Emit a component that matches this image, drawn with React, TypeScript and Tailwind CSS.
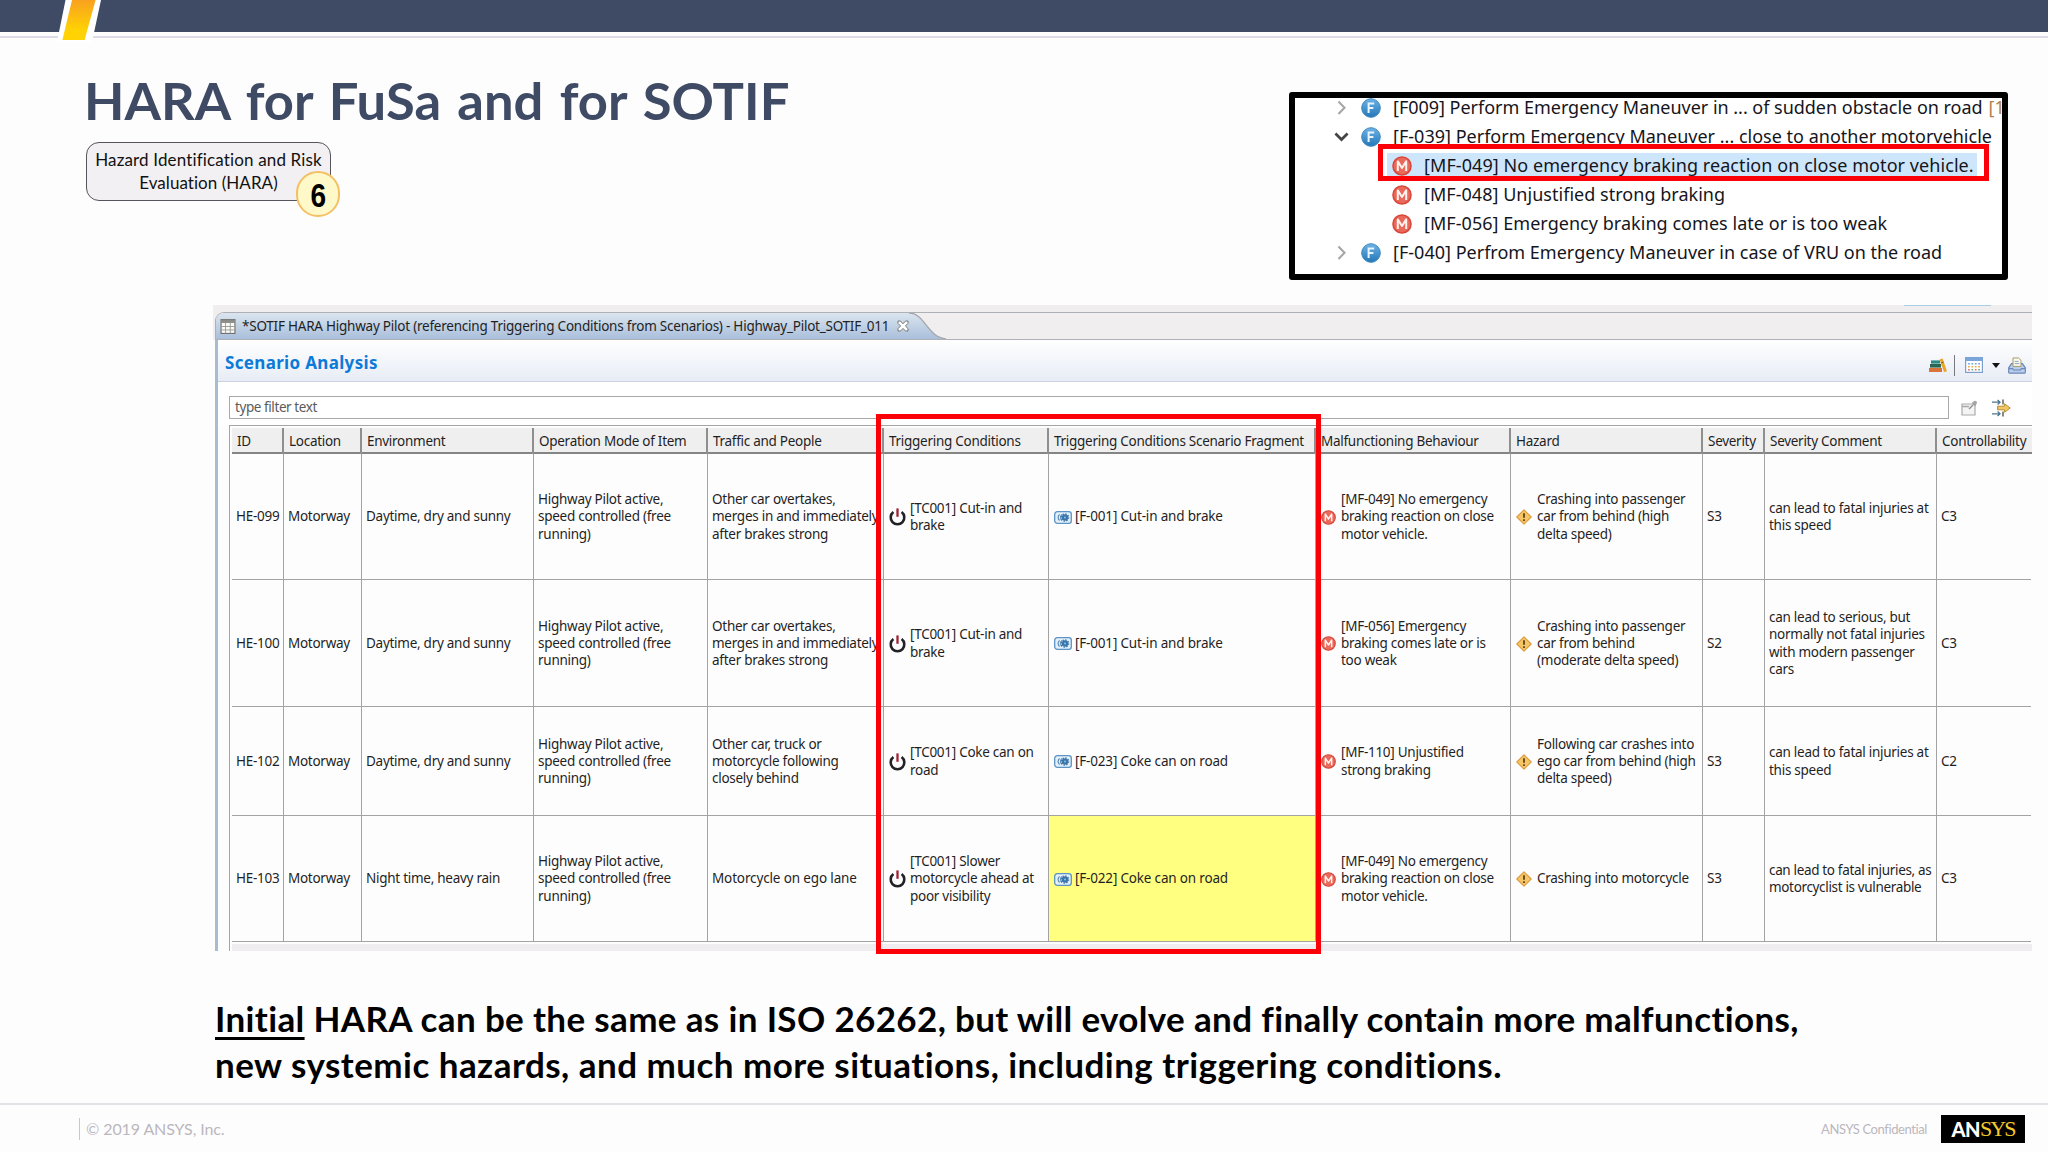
import { clsx } from "clsx"
import type { ReactNode } from "react"

type Cell = {
  text: string
  icon?: ReactNode
  highlight?: boolean
  textClass?: string
}

type TreeRow = {
  label: string
  kind: "F" | "M"
  state?: "open" | "closed"
  selected?: boolean
  suffix?: string
  labelClass: string
}

const GRID =
  "grid grid-cols-[52px_78px_172px_174px_176px_165px_267px_195px_192px_62px_172px_94px]"

function FunctionIcon() {
  return (
    <svg viewBox="0 0 20 20" className="size-5 shrink-0">
      <defs>
        <linearGradient id="fn-fill" x1="0" y1="0" x2="0" y2="1">
          <stop offset="0" stopColor="#6db3e6" />
          <stop offset="1" stopColor="#2377b8" />
        </linearGradient>
      </defs>
      <circle cx="10" cy="10" r="9.3" fill="url(#fn-fill)" stroke="#3e86bd" strokeWidth="1" />
      <path d="M7.6 15V5.4h5.6M7.6 10h4.8" fill="none" stroke="#e9f4fc" strokeWidth="2" />
    </svg>
  )
}

function MalfunctionIcon({ className }: { className: string }) {
  return (
    <svg viewBox="0 0 20 20" className={clsx("shrink-0", className)}>
      <circle cx="10" cy="10" r="9" fill="#e96a5b" stroke="#d9473c" strokeWidth="1.6" />
      <path
        d="M5.8 15V5.4L10 12l4.2-6.6V15"
        fill="none"
        stroke="#fff1ec"
        strokeWidth="2"
        strokeLinejoin="round"
      />
    </svg>
  )
}

function PowerIcon() {
  return (
    <svg viewBox="0 0 17 18" className="h-[18px] w-[17px] shrink-0">
      <path d="M4.4 4a6.8 6.8 0 1 0 8.2 0" fill="none" stroke="#222226" strokeWidth="2.6" />
      <path d="M8.5 0.4v8.4" stroke="#9c2433" strokeWidth="2.3" />
    </svg>
  )
}

function FragmentIcon() {
  return (
    <svg viewBox="0 0 18 13" className="-mr-px h-[13px] w-[18px] shrink-0">
      <rect x="0.7" y="0.7" width="16.6" height="11.6" rx="2.6" fill="#e3f0fa" stroke="#5c94c4" strokeWidth="1.3" />
      <path d="M5.6 3.6a3.6 3.6 0 0 0 0 5.8M8 3.6a3.6 3.6 0 0 0 0 5.8" fill="none" stroke="#5b8db9" strokeWidth="1.2" />
      <circle cx="11" cy="6.5" r="3.2" fill="#3a76ab" />
      <circle cx="11" cy="6.5" r="3.6" fill="none" stroke="#3a76ab" strokeWidth="1.4" strokeDasharray="1.4 1.4" />
      <circle cx="11" cy="6.5" r="0.9" fill="#9fc4e2" />
    </svg>
  )
}

function HazardIcon() {
  return (
    <svg viewBox="0 0 16 16" className="mr-px size-4 shrink-0">
      <path d="M8 0.8 15.2 8 8 15.2 0.8 8z" fill="#f6c565" stroke="#dd9c3c" strokeWidth="1.1" strokeLinejoin="round" />
      <path d="M8 4.2v4.6M8 10.2v1.8" stroke="#5e431b" strokeWidth="1.8" />
    </svg>
  )
}

function SheetIcon() {
  return (
    <svg viewBox="0 0 16 16" className="h-[15px] w-4 shrink-0">
      <rect x="0.6" y="0.6" width="14.8" height="14.8" fill="#fbfbf6" stroke="#6f6f6f" strokeWidth="1.2" />
      <rect x="0.6" y="0.6" width="14.8" height="3.6" fill="#8b8b88" />
      <path d="M1 8h14M1 11.7h14M5.4 4v11.4M10.4 4v11.4" stroke="#999" strokeWidth="1" />
    </svg>
  )
}

function BooksIcon() {
  return (
    <svg viewBox="0 0 18 15" className="h-[15px] w-[18px]">
      <rect x="2" y="2.4" width="9" height="3.2" fill="#2c8a86" />
      <rect x="1" y="6" width="11" height="3.6" fill="#2d6552" />
      <rect x="0" y="10" width="13" height="4" fill="#d9733a" />
      <path d="m10.6 1.6 3-1L18 13.2l-3 .9z" fill="#e9a52a" />
      <path d="m12 5 2.6-.9" stroke="#8d5a13" />
    </svg>
  )
}

function CalendarIcon() {
  return (
    <svg viewBox="0 0 18 16" className="h-4 w-[18px]">
      <rect x="0.6" y="0.6" width="16.8" height="14.8" fill="#fff" stroke="#7d9fce" strokeWidth="1.2" />
      <rect x="0.6" y="0.6" width="16.8" height="3.4" fill="#7ba6dc" />
      <path d="M3 6.8h12" stroke="#7aa8e0" strokeWidth="1.6" strokeDasharray="1.8 1.6" />
      <path d="M3 9.8h12" stroke="#e8b14c" strokeWidth="1.6" strokeDasharray="1.8 1.6" />
      <path d="M3 12.8h12" stroke="#e0767c" strokeWidth="1.6" strokeDasharray="1.8 5" />
      <path d="M6.4 12.8h9" stroke="#74b67a" strokeWidth="1.6" strokeDasharray="1.8 5" />
    </svg>
  )
}

function PrinterIcon() {
  return (
    <svg viewBox="0 0 18 17" className="h-[17px] w-[18px]">
      <path d="M3.6 6.6h10.8l2.9 4.2v4.4q0 1-1 1H1.7q-1 0-1-1v-4.4z" fill="#b9cdec" stroke="#6c87b8" strokeWidth="1.2" />
      <path d="M5 9.4V1h5.6L13 3.4v6z" fill="#fdfbe9" stroke="#a59a68" />
      <path d="M6.6 4.4h4M6.6 6.6h4.8" stroke="#8aa4cc" />
      <path d="M1 11.6h3.6l1 1.4h6.8l1-1.4H17" fill="none" stroke="#6c87b8" strokeWidth="1.2" />
    </svg>
  )
}

function PinnedViewIcon() {
  return (
    <svg viewBox="0 0 17 16" className="h-4 w-[17px]">
      <path d="M1 4h13v11H1z" fill="#f4f4f4" stroke="#aaa" strokeWidth="1.2" />
      <path d="M1 6.5h7" stroke="#aaa" strokeWidth="1.6" />
      <path d="m8 9 4-4M11.5 2.5l3 3" stroke="#8c8c8c" strokeWidth="1.4" />
      <circle cx="14" cy="2.8" r="2" fill="#a5a5a5" />
    </svg>
  )
}

function LinkColumnsIcon() {
  return (
    <svg viewBox="0 0 19 18" className="h-[18px] w-[19px]">
      <path d="M0 3.2h8M5.6 1l2.4 2.2-2.4 2.2M0 14.8h8M5.6 12.6 8 14.8 5.6 17" fill="none" stroke="#4d7590" strokeWidth="1.3" />
      <path d="M11 0.4v5M11 12.4v5" stroke="#4a4a4a" strokeWidth="1.3" />
      <path d="M5.6 7.2h7V4.8L18.2 9l-5.6 4.2v-2.4h-7z" fill="#efc765" stroke="#b98d2f" />
    </svg>
  )
}

const treeRows: TreeRow[] = [
  {
    label: "[F009] Perform Emergency Maneuver in ... of sudden obstacle on road",
    kind: "F",
    state: "closed",
    suffix: "[1",
    labelClass: "tracking-[-0.02px]",
  },
  {
    label: "[F-039] Perform Emergency Maneuver ... close to another motorvehicle",
    kind: "F",
    state: "open",
    labelClass: "tracking-[0.01px]",
  },
  {
    label: "[MF-049] No emergency braking reaction on close motor vehicle.",
    kind: "M",
    selected: true,
    labelClass: "tracking-[0.07px]",
  },
  { label: "[MF-048] Unjustified strong braking", kind: "M", labelClass: "tracking-[0.03px]" },
  { label: "[MF-056] Emergency braking comes late or is too weak", kind: "M", labelClass: "tracking-[0.04px]" },
  {
    label: "[F-040] Perfrom Emergency Maneuver in case of VRU on the road",
    kind: "F",
    state: "closed",
    labelClass: "tracking-[0.01px]",
  },
]

const columns = [
  "ID",
  "Location",
  "Environment",
  "Operation Mode of Item",
  "Traffic and People",
  "Triggering Conditions",
  "Triggering Conditions Scenario Fragment",
  "Malfunctioning Behaviour",
  "Hazard",
  "Severity",
  "Severity Comment",
  "Controllability",
]

const pilotActive = "Highway Pilot active,\nspeed controlled (free\nrunning)"
const carOvertakes = "Other car overtakes,\nmerges in and immediately\nafter brakes strong"

const trigger = (text: string): Cell => ({ text, icon: <PowerIcon /> })
const fragment = (text: string, highlight = false): Cell => ({
  text,
  icon: <FragmentIcon />,
  highlight,
  textClass: "tracking-[-0.18px]",
})
const malfunction = (text: string): Cell => ({ text, icon: <MalfunctionIcon className="mr-px size-[15px]" /> })
const hazard = (text: string): Cell => ({ text, icon: <HazardIcon /> })

const rows: { height: string; cells: Cell[] }[] = [
  {
    height: "h-[126px]",
    cells: [
      { text: "HE-099" },
      { text: "Motorway" },
      { text: "Daytime, dry and sunny" },
      { text: pilotActive },
      { text: carOvertakes },
      trigger("[TC001] Cut-in and\nbrake"),
      fragment("[F-001] Cut-in and brake"),
      malfunction("[MF-049] No emergency\nbraking reaction on close\nmotor vehicle."),
      hazard("Crashing into passenger\ncar from behind (high\ndelta speed)"),
      { text: "S3" },
      { text: "can lead to fatal injuries at\nthis speed" },
      { text: "C3" },
    ],
  },
  {
    height: "h-[127px]",
    cells: [
      { text: "HE-100" },
      { text: "Motorway" },
      { text: "Daytime, dry and sunny" },
      { text: pilotActive },
      { text: carOvertakes },
      trigger("[TC001] Cut-in and\nbrake"),
      fragment("[F-001] Cut-in and brake"),
      malfunction("[MF-056] Emergency\nbraking comes late or is\ntoo weak"),
      hazard("Crashing into passenger\ncar from behind\n(moderate delta speed)"),
      { text: "S2" },
      { text: "can lead to serious, but\nnormally not fatal injuries\nwith modern passenger\ncars" },
      { text: "C3" },
    ],
  },
  {
    height: "h-[109px]",
    cells: [
      { text: "HE-102" },
      { text: "Motorway" },
      { text: "Daytime, dry and sunny" },
      { text: pilotActive },
      { text: "Other car, truck or\nmotorcycle following\nclosely behind" },
      trigger("[TC001] Coke can on\nroad"),
      fragment("[F-023] Coke can on road"),
      malfunction("[MF-110] Unjustified\nstrong braking"),
      hazard("Following car crashes into\nego car from behind (high\ndelta speed)"),
      { text: "S3" },
      { text: "can lead to fatal injuries at\nthis speed" },
      { text: "C2" },
    ],
  },
  {
    height: "h-[126px]",
    cells: [
      { text: "HE-103" },
      { text: "Motorway" },
      { text: "Night time, heavy rain" },
      { text: pilotActive },
      { text: "Motorcycle on ego lane", textClass: "tracking-[-0.14px]" },
      trigger("[TC001] Slower\nmotorcycle ahead at\npoor visibility"),
      fragment("[F-022] Coke can on road", true),
      malfunction("[MF-049] No emergency\nbraking reaction on close\nmotor vehicle."),
      hazard("Crashing into motorcycle"),
      { text: "S3" },
      { text: "can lead to fatal injuries, as\nmotorcyclist is vulnerable", textClass: "tracking-[-0.34px]" },
      { text: "C3" },
    ],
  },
]

function TopBar() {
  return (
    <div className="relative h-8 bg-[#3f4a64]">
      <div className="absolute inset-x-0 top-9 h-[2px] bg-[#dcdce9]" />
      <svg viewBox="0 0 50 42" className="absolute top-0 left-[56px] h-[42px] w-[50px]">
        <defs>
          <linearGradient id="slash-fill" x1="0" y1="0" x2="0" y2="1">
            <stop offset="0" stopColor="#f9a11f" />
            <stop offset="0.75" stopColor="#ffd203" />
          </linearGradient>
        </defs>
        <path d="M9.5 0H45L36 42H1z" fill="#fff" />
        <path d="M16 0h23.6L28.6 40H6.4z" fill="url(#slash-fill)" />
      </svg>
    </div>
  )
}

function StepBadge() {
  return (
    <div className="relative mt-[10px] ml-[2px] h-[59px] w-[245px] rounded-[13px] border-[1.5px] border-[#57545b] bg-[#f2f0f3] pt-[5px] text-center font-[Lato,sans-serif] text-[17px] leading-[23px] text-[#111]">
      <p className="tracking-[0.15px] whitespace-nowrap">Hazard Identification and Risk</p>
      <p className="tracking-[0.05px]">Evaluation (HARA)</p>
      <div className="absolute top-[28px] left-[209px] flex h-[46px] w-[44px] items-center justify-center rounded-full border-2 border-[#f3c063] bg-[#fff8c9]">
        <span className="mt-[3px] scale-x-[0.85] font-['Liberation_Sans',Arial,sans-serif] text-[33px] leading-none font-bold text-black">
          6
        </span>
      </div>
    </div>
  )
}

function FunctionTree() {
  return (
    <div className="relative mt-[60px] mr-[40px] ml-auto h-[188px] w-[719px] rounded-[3px] border-6 border-black bg-white">
      <div className="h-full overflow-hidden">
        <div className="-mt-[5px] font-['Noto_Sans',sans-serif] text-[18px] leading-[29px] text-[#15151c]">
          {treeRows.map((row) => (
            <div
              key={row.label}
              className={clsx("flex h-[29px] items-center", row.kind === "F" ? "pl-[38px]" : "pl-[92px]")}
            >
              {row.kind === "F" && (
                <svg viewBox="0 0 14 14" className="mr-[11px] size-[17px] shrink-0">
                  {row.state === "open" ? (
                    <path d="m2 4.5 5 5 5-5" fill="none" stroke="#444" strokeWidth="2.2" />
                  ) : (
                    <path d="m4.5 2 5 5.2-5 5.2" fill="none" stroke="#a6a6a6" strokeWidth="1.7" />
                  )}
                </svg>
              )}
              <div
                className={clsx(
                  "flex h-[25px] items-center whitespace-nowrap",
                  row.selected && "w-[590px] bg-[#cde6fb]",
                  row.kind === "M" && "pl-[5px]",
                )}
              >
                {row.kind === "F" ? <FunctionIcon /> : <MalfunctionIcon className="size-5" />}
                <span className={clsx("ml-3", row.labelClass)}>{row.label}</span>
                {row.suffix && <span className="ml-[6px] text-[#b07f4f]">{row.suffix}</span>}
              </div>
            </div>
          ))}
        </div>
      </div>
      <div className="absolute top-[46px] left-[83px] h-[37px] w-[611px] border-[5px] border-[#fb0007]" />
    </div>
  )
}

function EditorTab() {
  return (
    <div className="h-[35px] bg-[#f0eeef]">
      <div className="flex h-[7px] justify-end pr-[41px]">
        <div className="h-px w-[87px] bg-[#a9cfe6]" />
      </div>
      <div className="ml-[2px] flex h-7 rounded-tl-[9px] border-y border-l border-[#adb0b5]">
        <div className="flex h-[26px] items-center rounded-tl-[8px] bg-linear-to-b from-[#dbe5ef] to-[#a9bfdb] pl-1 whitespace-nowrap">
          <SheetIcon />
          <span className="mt-px ml-[6px] w-[650px] text-[13.5px] tracking-[-0.23px]">
            *SOTIF HARA Highway Pilot (referencing Triggering Conditions from Scenarios) - Highway_Pilot_SOTIF_011
          </span>
          <svg viewBox="0 0 12 12" className="ml-[5px] size-3">
            <path
              d="M1 1h2.4L6 3.8 8.6 1H11v2.4L8.4 6l2.6 2.6V11H8.6L6 8.4 3.4 11H1V8.6L3.6 6 1 3.4z"
              fill="#fff"
              stroke="#777"
              strokeWidth="1"
            />
          </svg>
        </div>
        <svg viewBox="0 0 42 26" className="h-[26px] w-[42px]" preserveAspectRatio="none">
          <defs>
            <linearGradient id="tab-fill" x1="0" y1="0" x2="0" y2="1">
              <stop offset="0" stopColor="#dbe5ef" />
              <stop offset="1" stopColor="#a9bfdb" />
            </linearGradient>
          </defs>
          <path d="M0 0C16 0 18 24 37 26H0z" fill="url(#tab-fill)" />
          <path d="M0 0C16 0 18 24 37 26" fill="none" stroke="#a3a6aa" strokeWidth="1.3" />
        </svg>
      </div>
    </div>
  )
}

function ScenarioTable() {
  return (
    <div className="relative ml-[11px] h-[526px] border-t border-l border-[#a5a5a5] pt-[2px] pl-[2px]">
      <div className={clsx(GRID, "h-[26px] border-b-2 border-[#858585] bg-[#f0eff0]")}>
        {columns.map((name) => (
          <div
            key={name}
            className="border-r-2 border-[#8f8f8f] pl-[5px] text-[13.5px] leading-[26px] tracking-[-0.28px] whitespace-nowrap last:border-r-0"
          >
            {name}
          </div>
        ))}
      </div>
      {rows.map((row) => (
        <div key={row.cells[0].text} className={clsx(GRID, row.height)}>
          {row.cells.map((cell, i) => (
            <div
              key={i}
              className={clsx(
                "flex items-center gap-1 border-r border-b border-[#a3a3a6] pt-px whitespace-pre last:border-r-0",
                cell.icon ? "pl-[5px]" : "pl-1",
                cell.highlight && "bg-[#ffff80]",
              )}
            >
              {cell.icon}
              <span className={clsx("text-[13.5px] leading-[17.3px]", cell.textClass ?? "tracking-[-0.27px]")}>
                {cell.text}
              </span>
            </div>
          ))}
        </div>
      ))}
      <div className="mt-[2px] h-[7px] bg-[#efedef]" />
      <div className="absolute -top-[12px] left-[646px] h-[540px] w-[445px] border-[5px] border-[#fb0007]" />
    </div>
  )
}

function ScenarioEditor() {
  return (
    <section className="ml-[213px] h-[646px] w-[1819px] font-['Noto_Sans',sans-serif] text-[#1f1f24]">
      <EditorTab />
      <div className="ml-[2px] h-[611px] border-l-3 border-[#a9bccf]">
        <div className="flex h-[42px] items-center border-b border-[#cbd2df] bg-linear-to-b from-white to-[#e7ecf5] pt-[9px] pr-[6px] pl-[7px]">
          <h2 className="-mt-[5px] text-[17px] font-bold tracking-[0.33px] text-[#0c7bd8]">Scenario Analysis</h2>
          <div className="ml-auto flex items-center">
            <BooksIcon />
            <div className="mr-[10px] ml-[7px] h-[21px] w-px bg-[#77797f]" />
            <CalendarIcon />
            <svg viewBox="0 0 8 5" className="mr-2 ml-[9px] h-[5px] w-2">
              <path d="M0 0h8L4 5z" fill="#111" />
            </svg>
            <PrinterIcon />
          </div>
        </div>
        <div className="flex h-[43px] items-center bg-white pt-[8px] pr-[21px] pl-[11px]">
          <div className="h-[23px] w-[1720px] border border-[#a9a9a9] pl-[5px] text-[13.5px] leading-[21px] tracking-[-0.42px] text-[#5b5b5b]">
            type filter text
          </div>
          <div className="ml-auto flex items-center gap-[14px]">
            <PinnedViewIcon />
            <LinkColumnsIcon />
          </div>
        </div>
        <ScenarioTable />
      </div>
    </section>
  )
}

function Footer() {
  return (
    <footer className="mt-auto flex h-[49px] items-start border-t-2 border-[#e4e2e7] pr-[23px] pl-[79px] font-[Lato,sans-serif] text-[#bab7bd]">
      <p className="mt-[13px] h-[22px] border-l border-[#c9c7cc] pl-[6px] text-[16px] leading-[22px] tracking-[-0.1px]">
        © 2019 ANSYS, Inc.
      </p>
      <p className="mt-[14px] ml-auto text-[13px] leading-[20px] tracking-[-0.4px]">ANSYS Confidential</p>
      <div className="mt-[10px] ml-[14px] flex h-[28px] w-[84px] items-center justify-center bg-black text-[20px] leading-none">
        <span className="font-black tracking-[-0.5px] text-white">AN</span>
        <span className="font-['Liberation_Serif',serif] text-[22px] tracking-[-2px] text-[#f5c92b]">SYS</span>
      </div>
    </footer>
  )
}

export default function App() {
  return (
    <main className="flex h-[1152px] w-[2048px] flex-col overflow-hidden bg-[#fefdfe]">
      <TopBar />
      <header className="flex h-[273px] items-start pl-[84px]">
        <div className="pt-9">
          <h1 className="font-[Lato,sans-serif] text-[52.5px] leading-[64px] font-bold whitespace-nowrap text-[#3f4a64] [word-spacing:3.5px]">
            HARA for FuSa and for SOTIF
          </h1>
          <StepBadge />
        </div>
        <FunctionTree />
      </header>
      <ScenarioEditor />
      <p className="mt-[44px] ml-[215px] font-[Lato,sans-serif] text-[35px] leading-[46px] font-bold whitespace-nowrap text-black">
        <span className="tracking-[0.35px]">
          <span className="underline decoration-3 underline-offset-[5px]">Initial</span> HARA can be the same as in ISO
          26262, but will evolve and finally contain more malfunctions,
        </span>
        <br />
        <span className="tracking-[0.46px]">
          new systemic hazards, and much more situations, including triggering conditions.
        </span>
      </p>
      <Footer />
    </main>
  )
}
